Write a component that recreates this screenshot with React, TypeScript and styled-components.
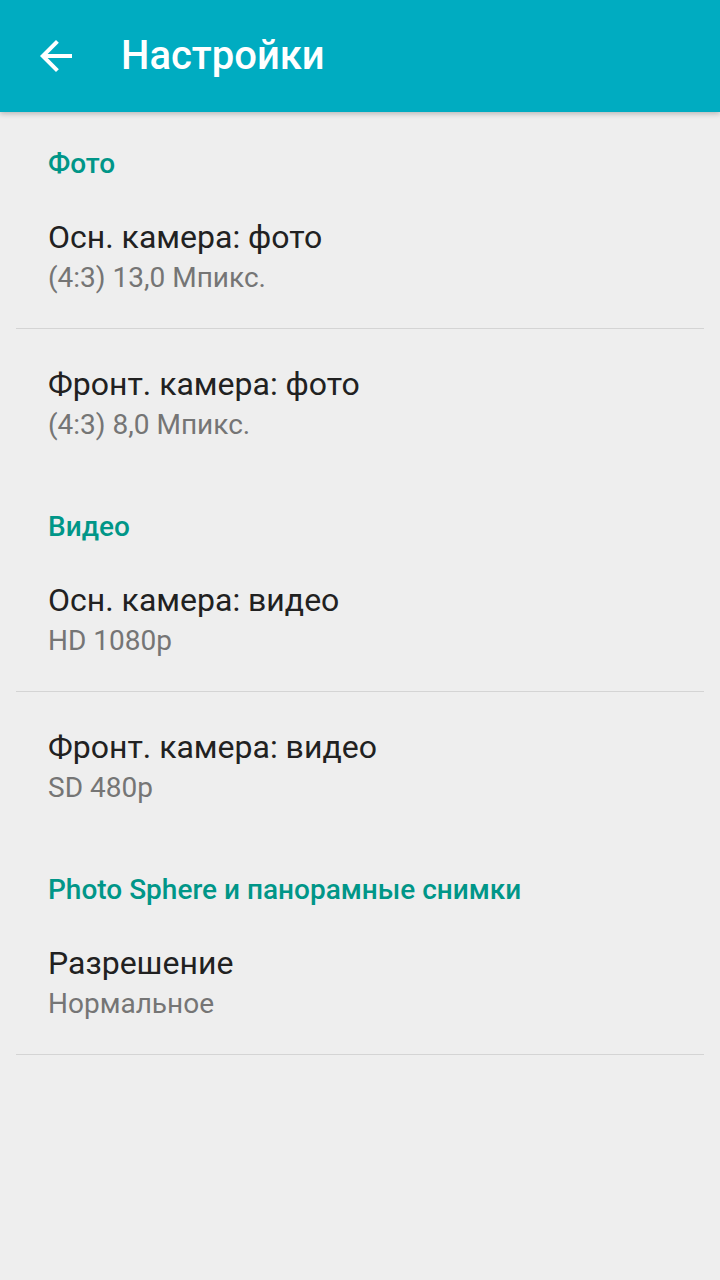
import styled, { createGlobalStyle } from "styled-components";

const GlobalStyle = createGlobalStyle`
  html, body {
    margin: 0;
    padding: 0;
    background: #eeeeee;
  }
  body {
    font-family: Roboto, "Noto Sans", "Liberation Sans", sans-serif;
    -webkit-font-smoothing: antialiased;
  }
`;

type Pref = { title: string; summary: string };
type Section = { name: string; items: Pref[] };

const sections: Section[] = [
  {
    name: "Фото",
    items: [
      { title: "Осн. камера: фото", summary: "(4:3) 13,0 Мпикс." },
      { title: "Фронт. камера: фото", summary: "(4:3) 8,0 Мпикс." },
    ],
  },
  {
    name: "Видео",
    items: [
      { title: "Осн. камера: видео", summary: "HD 1080p" },
      { title: "Фронт. камера: видео", summary: "SD 480p" },
    ],
  },
  {
    name: "Photo Sphere и панорамные снимки",
    items: [{ title: "Разрешение", summary: "Нормальное" }],
  },
];

const App = () => {
  return (
    <>
      <GlobalStyle />
      <Screen>
        <Toolbar>
          <BackButton aria-label="Назад">
            <svg width="48" height="48" viewBox="0 0 24 24">
              <path
                d="M20 11H7.83l5.59-5.59L12 4l-8 8 8 8 1.41-1.41L7.83 13H20v-2z"
                fill="#ffffff"
              />
            </svg>
          </BackButton>
          <Title>Настройки</Title>
        </Toolbar>
        <List>
          {sections.map((section) => (
            <div key={section.name}>
              <Category>{section.name}</Category>
              {section.items.map((item, i) => (
                <Item key={item.title} $divider={i < section.items.length - 1 || section.items.length === 1}>
                  <ItemTitle>{item.title}</ItemTitle>
                  <ItemSummary>{item.summary}</ItemSummary>
                </Item>
              ))}
            </div>
          ))}
        </List>
      </Screen>
    </>
  );
};
export default App;

const Screen = styled.div`
  width: 720px;
  min-height: 1280px;
  background: #eeeeee;
`;

const Toolbar = styled.header`
  position: relative;
  z-index: 1;
  height: 112px;
  background: #00acc1;
  display: flex;
  align-items: center;
  padding-left: 32px;
  box-shadow: 0 2px 5px rgba(0, 0, 0, 0.22);
`;

const BackButton = styled.div`
  width: 48px;
  height: 48px;
  display: flex;
  align-items: center;
  justify-content: center;
`;

const Title = styled.h1`
  margin: 0 0 0 41px;
  color: #ffffff;
  font-size: 40px;
  font-weight: 500;
  line-height: 48px;
`;

const List = styled.div`
  display: flex;
  flex-direction: column;
`;

const Category = styled.div`
  margin: 0 16px;
  padding: 33px 32px 0;
  line-height: 37px;
  font-size: 28px;
  font-weight: 500;
  color: #009688;
`;

const Item = styled.div<{ $divider: boolean }>`
  margin: 0 16px;
  padding: 32px 32px;
  border-bottom: ${(p) => (p.$divider ? "1px solid #d4d4d4" : "none")};
`;

const ItemTitle = styled.div`
  font-size: 32px;
  line-height: 46px;
  color: #212121;
`;

const ItemSummary = styled.div`
  font-size: 28px;
  line-height: 36px;
  color: #757575;
`;
